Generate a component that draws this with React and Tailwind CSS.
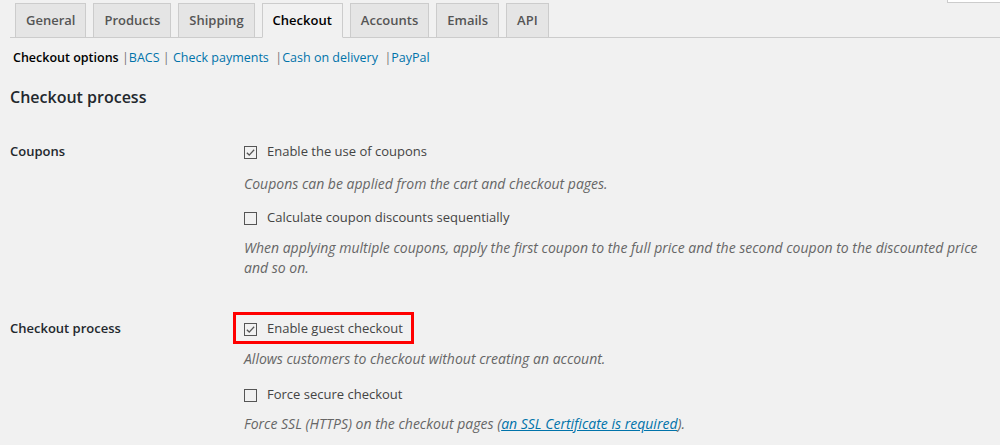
const tabs = ['General', 'Products', 'Shipping', 'Checkout', 'Accounts', 'Emails', 'API'];

const Checkbox = ({ checked }) => (
  <span className="inline-flex w-[13px] h-[13px] border border-[#555] bg-transparent items-center justify-center shrink-0">
    {checked && (
      <svg className="w-[11px] h-[11px]" viewBox="0 0 12 12" fill="none" stroke="#555" strokeWidth="1.4">
        <path d="M2 6.2l2.6 2.6L10 3" />
      </svg>
    )}
  </span>
);

const Option = ({ checked, children }) => (
  <label className="flex items-center h-5 gap-[10px] text-[13px] text-[#444]">
    <Checkbox checked={checked} />
    <span>{children}</span>
  </label>
);

const Desc = ({ children, className = '' }) => (
  <p className={`italic text-[14px] leading-5 text-[#666] ${className}`}>{children}</p>
);

export default function App() {
  return (
    <div className="relative min-h-[445px] w-[1000px] bg-[#f1f1f1] font-['Open_Sans',sans-serif] overflow-hidden">
      {/* screen options box edge */}
      <div className="absolute top-0 right-0 w-[53px] h-[3px] bg-white border-l border-b border-[#ccc]" />

      {/* Tabs */}
      <div className="ml-[10px] pt-[3px] pl-[5px] flex gap-[7px] border-b border-[#ccc]">
        {tabs.map((t) => (
          <div
            key={t}
            className={`px-[10px] h-[35px] flex items-center border border-[#ccc] -mb-px text-[13px] font-semibold ${
              t === 'Checkout' ? 'bg-[#f1f1f1] border-b-[#f1f1f1] text-black' : 'bg-[#e5e5e5] text-[#555]'
            }`}
          >
            {t}
          </div>
        ))}
      </div>

      {/* Sub navigation */}
      <div className="pl-[13px] mt-[10px] h-5 flex items-center text-[12.5px] text-[#777] whitespace-pre">
        <span className="font-semibold text-black">Checkout options</span>
        <span> |</span>
        <span className="text-[#0073aa]">BACS</span>
        <span> | </span>
        <span className="text-[#0073aa]">Check payments</span>
        <span>  |</span>
        <span className="text-[#0073aa]">Cash on delivery</span>
        <span>  |</span>
        <span className="text-[#0073aa]">PayPal</span>
      </div>

      <div className="px-[10px]">
        <h2 className="mt-[19px] h-[20px] flex items-center text-[16px] font-semibold text-[#23282d]">Checkout process</h2>

        {/* Coupons */}
        <div className="mt-[35px] flex">
          <div className="w-[234px] h-5 flex items-center text-[13px] font-semibold text-[#23282d]">Coupons</div>
          <div className="flex-1">
            <Option checked>Enable the use of coupons</Option>
            <Desc className="mt-[12px]">Coupons can be applied from the cart and checkout pages.</Desc>
            <div className="mt-[14px]">
              <Option>Calculate coupon discounts sequentially</Option>
            </div>
            <Desc className="mt-[10px]">
              When applying multiple coupons, apply the first coupon to the full price and the second coupon to the discounted price and so on.
            </Desc>
          </div>
        </div>

        {/* Checkout process */}
        <div className="mt-[41px] flex">
          <div className="w-[234px] h-5 flex items-center text-[13px] font-semibold text-[#23282d]">Checkout process</div>
          <div className="flex-1">
            <div className="relative w-fit">
              <span className="absolute -left-[11px] -right-[11px] -top-[7px] -bottom-[5px] border-[3px] border-[#f00] pointer-events-none" />
              <Option checked>Enable guest checkout</Option>
            </div>
            <Desc className="mt-[10px]">Allows customers to checkout without creating an account.</Desc>
            <div className="mt-[16px]">
              <Option>Force secure checkout</Option>
            </div>
            <Desc className="mt-[9px]">
              Force SSL (HTTPS) on the checkout pages (<span className="text-[#0073aa] underline">an SSL Certificate is required</span>).
            </Desc>
          </div>
        </div>
      </div>
    </div>
  );
}
